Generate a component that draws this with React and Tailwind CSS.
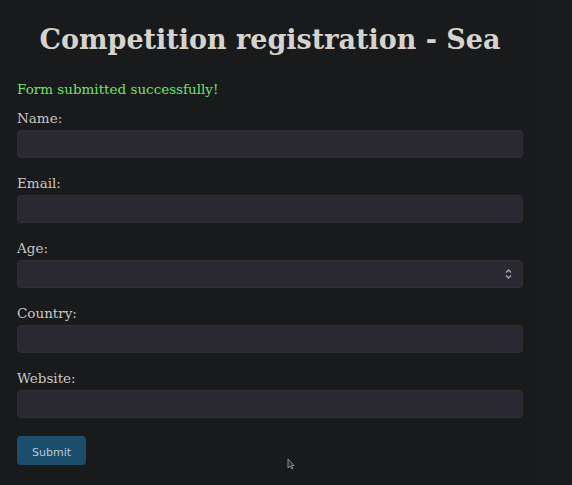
import { useState } from 'react';

const serif = { fontFamily: '"DejaVu Serif", "Liberation Serif", serif' };

function Field({ label, children }) {
    return (
        <div className="mb-[16px]">
            <label className="block text-[13.5px] leading-[18px] text-[#c9c7c3] mb-[3px]">{label}</label>
            {children}
        </div>
    );
}

function TextInput() {
    return (
        <input
            type="text"
            className="block w-full h-[28px] rounded-[4px] bg-[#2a2932] border border-[#302f38] outline-none px-2 text-[#ddd]"
        />
    );
}

export default function App() {
    const [submitted] = useState(true);

    return (
        <div className="flex min-h-[485px] bg-[#191a1b]" style={serif}>
            <div className="relative w-[537px]">
                <div className="pl-[17px] w-[523px]">
                    {/* Heading */}
                    <h1 className="pt-[23px] text-center text-[27px] leading-[34px] font-bold text-[#d6d3ce]">
                        Competition registration - Sea
                    </h1>

                    {submitted && (
                        <p className="mt-[23px] text-[13.5px] leading-[18px] text-[#6ee36a]">Form submitted successfully!</p>
                    )}

                    <form className="mt-[11px]">
                        <Field label="Name:"><TextInput /></Field>
                        <Field label="Email:"><TextInput /></Field>
                        <Field label="Age:">
                            <div className="relative">
                                <select className="block w-full h-[28px] rounded-[4px] bg-[#2a2932] border border-[#302f38] outline-none appearance-none" />
                                <svg className="absolute right-[11px] top-1/2 -translate-y-1/2" width="7" height="11" viewBox="0 0 7 11" fill="none" stroke="#a9a8ad" strokeWidth="1.3">
                                    <path d="M1 4 L3.5 1.5 L6 4" />
                                    <path d="M1 7 L3.5 9.5 L6 7" />
                                </svg>
                            </div>
                        </Field>
                        <Field label="Country:"><TextInput /></Field>
                        <Field label="Website:"><TextInput /></Field>

                        <button
                            type="button"
                            className="mt-[2px] w-[69px] h-[29px] rounded-[4px] bg-[#1b4d6d] text-[11px] leading-[29px] pt-[2px] text-[#b9cad8]"
                            style={{ fontFamily: '"DejaVu Sans", "Liberation Sans", sans-serif' }}
                        >
                            Submit
                        </button>
                    </form>
                </div>

                {/* mouse cursor */}
                <svg className="absolute left-[287px] top-[458px]" width="8" height="12" viewBox="0 0 8 12">
                    <path d="M1 1 L1 10 L3 8 L5 11 L6 10.5 L4.5 7.5 L7 7.5 Z" fill="#2a2a2a" stroke="#8a8a8a" strokeWidth="1" />
                </svg>
            </div>
            <div className="flex-1 bg-[#1b1c1d]" />
        </div>
    );
}
